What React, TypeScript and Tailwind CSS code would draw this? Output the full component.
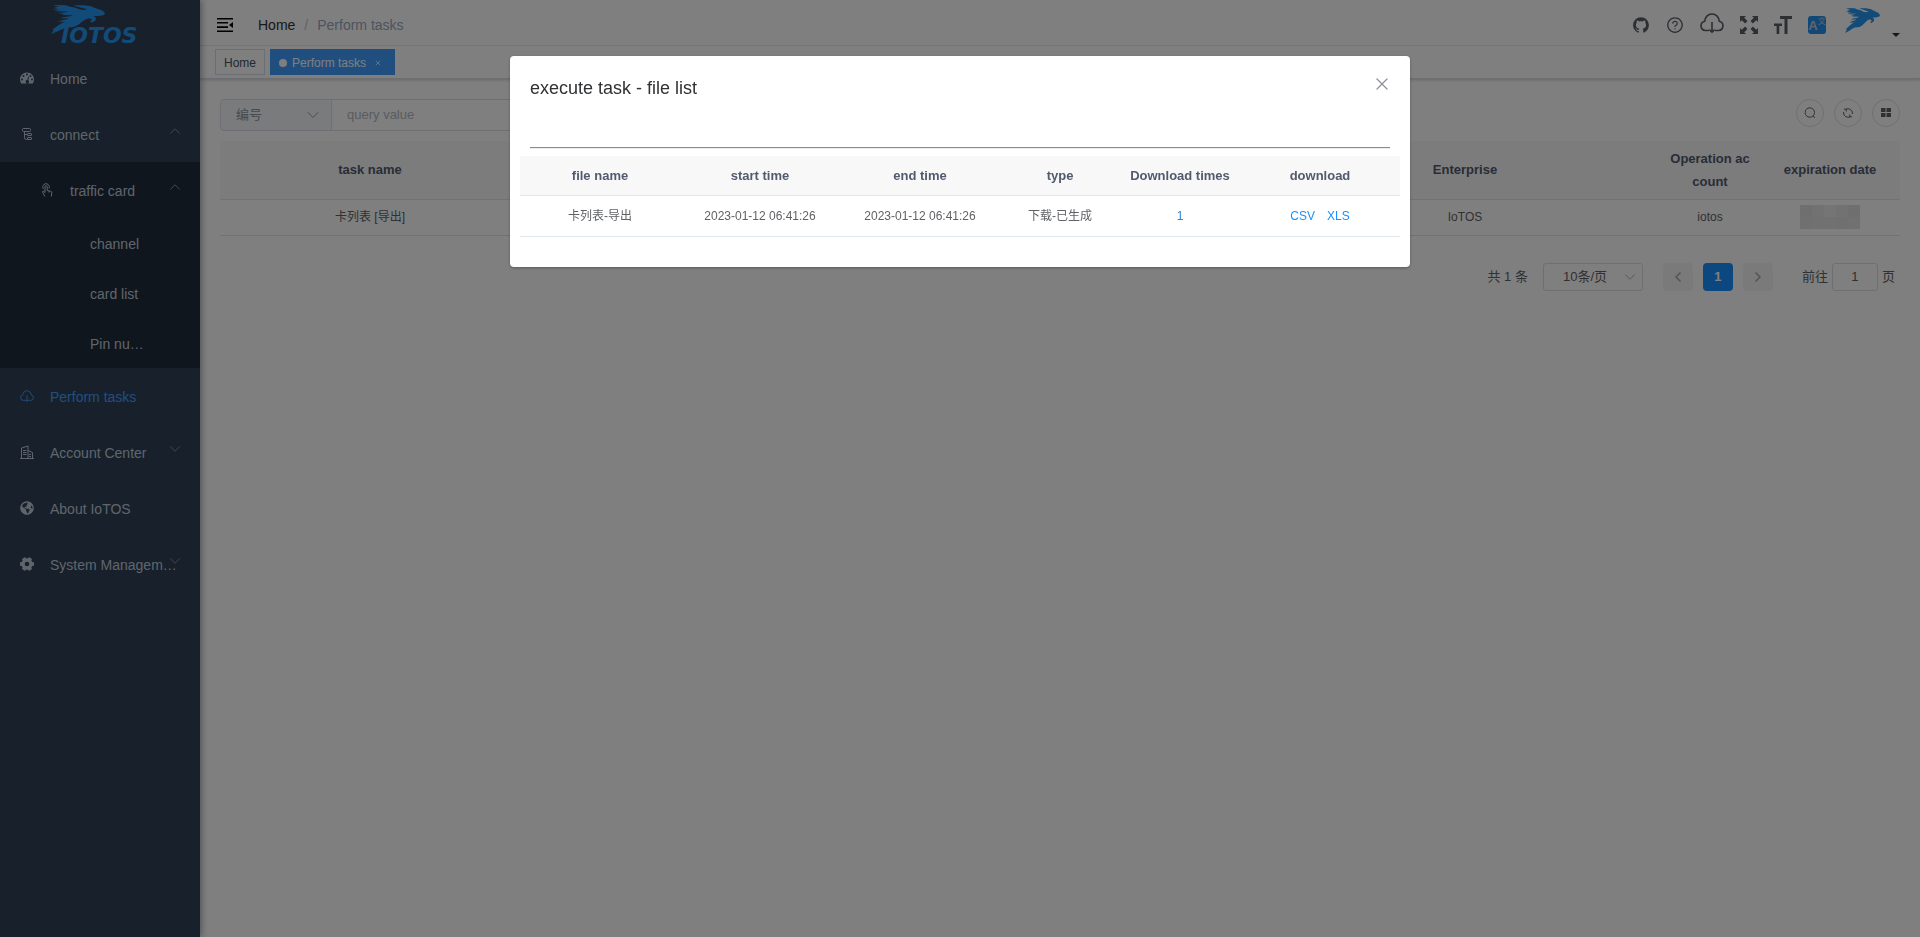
import React from 'react';
import { AiFillGithub, AiOutlineQuestionCircle } from 'react-icons/ai';
import { FaGlobeAmericas } from 'react-icons/fa';
import { ChevronDown, ChevronLeft, ChevronRight, ChevronUp, X } from 'lucide-react';

type IconProps = { className?: string };

function Leopard({ className }: IconProps) {
  return (
    <svg viewBox="0 0 158 88" className={className} fill="#2796f0" preserveAspectRatio="none" aria-hidden="true">
      <path d="M4 0 L44 1 L56 5 L72 8 L82 13 L98 15 L106 13 L92 9 L70 3 L66 1 L96 1 L118 4 L128 9 L140 13 L150 17 L158 25 L155 30 L140 33 L126 33 L132 41 L130 47 L120 53 L114 50 L121 44 L112 40 L102 43 L92 50 L80 60 L66 67 L44 69 L30 74 L20 80 L0 88 L9 75 L3 76 L14 67 L24 60 L34 54 L42 51 L20 51 L30 47 L44 44 L52 40 L26 41 L36 37 L56 34 L64 31 L30 30 L40 27 L20 24 L42 22 L52 20 L12 19 L14 17 L30 15 L4 13 L20 10 L8 7 L24 5 Z" />
    </svg>
  );
}

function DashboardIcon({ className }: IconProps) {
  return (
    <svg viewBox="0 0 28 24" className={className} aria-hidden="true">
      <path
        fill="currentColor"
        fillRule="evenodd"
        d="M14 1C6.300 1 0 7.300 0 15c0 3 .9 5.600 2.400 7.800.2.300.5.400.8.400h21.600c.3 0 .6-.1.800-.4C27.100 20.600 28 18 28 15 28 7.300 21.700 1 14 1zM4 13a2 2 0 1 1 0 4 2 2 0 0 1 0-4zM7 6a2 2 0 1 1 0 4 2 2 0 0 1 0-4zM14 3a2 2 0 1 1 0 4 2 2 0 0 1 0-4zM21 6a2 2 0 1 1 0 4 2 2 0 0 1 0-4zM24 13a2 2 0 1 1 0 4 2 2 0 0 1 0-4zM16.500 9l1.800.5-1.900 7.200a3.200 3.200 0 1 1-1.900-.5z"
      />
    </svg>
  );
}

function ConnectIcon({ className }: IconProps) {
  return (
    <svg viewBox="0 0 14 14" className={className} fill="none" stroke="currentColor" aria-hidden="true">
      <rect x="2.500" y="1.500" width="8" height="3" rx="1" />
      <path d="M4.500 4.500v6q0 2 2 2h1M4.500 7.500h3" />
      <rect x="7.500" y="6.500" width="4" height="2" rx=".5" />
      <rect x="7.500" y="10.500" width="4" height="2" rx=".5" />
    </svg>
  );
}

function TapIcon({ className }: IconProps) {
  return (
    <svg viewBox="0 0 14 14" className={className} fill="none" stroke="currentColor" aria-hidden="true">
      <path d="M3.300 5.800A3.300 3.300 0 1 1 9 5.500" />
      <path d="M5 9.500V3.800a1.100 1.100 0 0 1 2.200 0V7.500l3.500.7q1.300.3 1.100 1.600l-.5 3.700M5 9.500 3.300 8.200q-1-.3-.7.7l2.200 4.600M9 8v1.500" />
    </svg>
  );
}

function GearIcon({ className }: IconProps) {
  return (
    <svg viewBox="0 0 14 14" className={className} fill="none" stroke="currentColor" aria-hidden="true">
      <circle cx="7" cy="7" r="4" strokeWidth="3.400" />
      <path d="M11.500 7H14M0 7h2.500M9.300 10.900l1.200 2.100M3.500 1l1.200 2.100M4.700 10.900 3.500 13M10.500 1 9.300 3.100" strokeWidth="3.600" />
    </svg>
  );
}

function CloudDown({ className }: IconProps) {
  return (
    <svg viewBox="0 0 24 20" className={className} fill="none" stroke="currentColor" strokeWidth="1.600" strokeLinecap="round" strokeLinejoin="round" aria-hidden="true">
      <path d="M8.500 17.500H5.500A4.700 4.700 0 0 1 4.800 8.200 7.200 7.200 0 0 1 19.200 8.200 4.700 4.700 0 0 1 18.500 17.500H15.500" />
      <path d="M12 9.500v9.500M9.800 17l2.200 2.200 2.200-2.200" />
    </svg>
  );
}

function BuildingIcon({ className }: IconProps) {
  return (
    <svg viewBox="0 0 14 14" className={className} fill="none" stroke="currentColor" aria-hidden="true">
      <path d="M0 13.500h14M1.500 13V3L8 1v12M8 5.500l4.500 2V13M3 5.500h3.500M3 7.500h3.500M3 9.500h3.500M9 9.500h2M9 11.500h2" />
    </svg>
  );
}

function FoldIcon({ className }: IconProps) {
  return (
    <svg viewBox="0 0 16 14" className={className} fill="currentColor" aria-hidden="true">
      <path d="M0 0h16v1.600H0zM0 4h11v1.600H0zM0 8.300h11v1.600H0zM0 12.400h16V14H0zM16 4v6l-4-3z" />
    </svg>
  );
}

function FullscreenIcon({ className }: IconProps) {
  return (
    <svg viewBox="0 0 18 18" className={className} fill="currentColor" aria-hidden="true">
      <path d="M0 0h6L4.200 1.800 7.500 5.100 5.100 7.500 1.800 4.200 0 6zM18 0v6l-1.800-1.800-3.300 3.300-2.400-2.400 3.300-3.300L12 0zM0 18v-6l1.800 1.800 3.300-3.300 2.400 2.400-3.300 3.300L6 18zM18 18h-6l1.800-1.800-3.300-3.300 2.400-2.400 3.300 3.300L18 12z" />
    </svg>
  );
}

function SizeIcon({ className }: IconProps) {
  return (
    <svg viewBox="0 0 18 18" className={className} fill="currentColor" aria-hidden="true">
      <path d="M6 0h12v3h-4.500v15h-3V3H6zM0 7.500h8v2.500H5.300v8H2.600v-8H0z" />
    </svg>
  );
}

function SearchIcon({ className }: IconProps) {
  return (
    <svg viewBox="0 0 12 12" className={className} fill="none" stroke="currentColor" aria-hidden="true">
      <circle cx="5.800" cy="5.500" r="4.700" />
      <path d="m9 9 2 1.800" />
    </svg>
  );
}

function RefreshIcon({ className }: IconProps) {
  return (
    <svg viewBox="0 0 12 12" className={className} fill="none" stroke="currentColor" aria-hidden="true">
      <path d="M4 2.200A4.400 4.400 0 0 1 10.400 6v1M8 9.800A4.400 4.400 0 0 1 1.600 6V5M2 2.200H4.200V4.500M10 9.800H7.800V7.500" />
    </svg>
  );
}

function GridIcon({ className }: IconProps) {
  return (
    <svg viewBox="0 0 12 12" className={className} fill="currentColor" aria-hidden="true">
      <path d="M1 1h4.500v4H1zM6.500 1H11v4H6.500zM1 6h4.500v4H1zM6.500 6H11v4H6.500z" />
    </svg>
  );
}

type ItemProps = {
  icon: React.ReactNode;
  label: string;
  active?: boolean;
  nested?: boolean;
  arrow?: 'up' | 'down';
};

function MenuItem({ icon, label, active, nested, arrow }: ItemProps) {
  return (
    <a
      href="#"
      className={`relative flex h-14 items-center ${nested ? 'pl-10' : 'pl-5'} ${active ? 'text-[#409eff]' : 'text-[#bfcbd9]'}`}
    >
      <span className="mr-4 flex w-3.5 shrink-0 justify-center">{icon}</span>
      <span className="whitespace-nowrap pt-px">{label}</span>
      {arrow && (
        <span className="absolute right-4 top-4 text-[#909399]">
          {arrow === 'up' ? <ChevronUp size={18} strokeWidth={1.250} /> : <ChevronDown size={18} strokeWidth={1.250} />}
        </span>
      )}
    </a>
  );
}

function Sidebar() {
  return (
    <aside className="z-10 w-[200px] shrink-0 bg-[#304156] text-sm shadow-[2px_0_6px_rgba(0,21,41,0.35)]">
      <a href="#" className="flex h-[50px] flex-col pl-[51px] pt-[5px] text-[#2796f0]">
        <Leopard className="h-[29px] w-[54px] shrink-0" />
        <span className="-mt-2 ml-2.5 font-['DejaVu_Sans'] text-[22px] font-bold italic leading-5">IOTOS</span>
      </a>
      <nav>
        <MenuItem icon={<DashboardIcon className="h-3 w-3.5" />} label="Home" />
        <MenuItem icon={<ConnectIcon className="size-3.5" />} label="connect" arrow="up" />
        <div className="bg-[#1f2d3d]">
          <MenuItem icon={<TapIcon className="size-3.5" />} label="traffic card" arrow="up" nested />
          {['channel', 'card list', 'Pin nu…'].map((t) => (
            <a key={t} href="#" className="flex h-[50px] items-center pl-[90px] pt-0.5 text-[#bfcbd9]">
              {t}
            </a>
          ))}
        </div>
        <MenuItem icon={<CloudDown className="h-3 w-3.5" />} label="Perform tasks" active />
        <MenuItem icon={<BuildingIcon className="size-3.5" />} label="Account Center" arrow="down" />
        <MenuItem icon={<FaGlobeAmericas className="size-3.5" />} label="About IoTOS" />
        <MenuItem icon={<GearIcon className="size-3.5" />} label="System Managem…" arrow="down" />
      </nav>
    </aside>
  );
}

function Header() {
  return (
    <header className="bg-white">
      <div className="flex h-[46px] items-center justify-between border-b border-[#f0f0f0] pl-[17px] pr-5 pt-1">
        <div className="flex items-center">
          <button aria-label="Toggle sidebar" className="text-black">
            <FoldIcon className="h-3.5 w-4" />
          </button>
          <nav className="ml-[25px] flex gap-[9px] text-sm">
            <a href="#" className="text-[#303133]">Home</a>
            <span className="text-[#c0c4cc]">/</span>
            <span className="text-[#97a8be]">Perform tasks</span>
          </nav>
        </div>
        <div className="flex items-center gap-4 text-[#5a5e66]">
          <a href="#" aria-label="GitHub"><AiFillGithub className="size-[18px]" /></a>
          <a href="#" aria-label="Help"><AiOutlineQuestionCircle className="size-[18px]" /></a>
          <button aria-label="Downloads" className="pb-1"><CloudDown className="h-5 w-6" /></button>
          <button aria-label="Fullscreen"><FullscreenIcon className="size-[18px]" /></button>
          <button aria-label="Font size"><SizeIcon className="size-[18px]" /></button>
          <button aria-label="Language" className="flex size-[18px] justify-center rounded-[3px] bg-[#2490f0] text-[#c8ccd2]">
            <span className="pt-1 text-[13px] font-bold leading-3">A</span>
            <span className="pt-0.5 text-[8px] leading-[8px]">文</span>
          </button>
          <button aria-label="Account" className="ml-[3px] flex items-end gap-3">
            <Leopard className="mb-2 h-[25px] w-[35px]" />
            <svg viewBox="0 0 8 4" className="mb-1 h-1 w-2" aria-hidden="true"><path d="M0 0h8L4 4z" fill="#303133" /></svg>
          </button>
        </div>
      </div>
      <div className="flex h-[33px] gap-[5px] border-b border-[#d8dce5] pl-[15px] pt-[3px] text-xs shadow-[0_1px_3px_rgba(0,0,0,0.2)]">
        <a href="#" className="flex h-[26px] items-center border border-[#d8dce5] px-2 pt-0.5 text-[#495060]">Home</a>
        <a href="#" className="flex h-[26px] items-center bg-[#409eff] px-[9px] pt-0.5 text-white">
          <span className="mr-[5px] size-2 rounded-full bg-white" />
          Perform tasks
          <X size={8} className="ml-2 mr-1" />
        </a>
      </div>
    </header>
  );
}

const roundButton = 'flex size-7 items-center justify-center rounded-full border border-[#dcdfe6] text-[#606266]';

function Toolbar() {
  return (
    <div className="flex h-[42px] items-start justify-between">
      <div className="flex h-8 text-[13px]">
        <label className="relative flex w-28 items-center rounded-l border border-[#dcdfe6] bg-[#f5f7fa] text-[#909399]">
          <select aria-label="Search field" className="h-full w-full appearance-none pl-[15px] outline-none">
            <option>编号</option>
          </select>
          <ChevronDown size={20} strokeWidth={1.250} className="pointer-events-none absolute right-2 text-[#a8abb2]" />
        </label>
        <input aria-label="Query value" placeholder="query value" className="w-60 border-y border-r border-[#dcdfe6] px-[15px] outline-none placeholder:text-[#b4b8c0]" />
      </div>
      <div className="flex gap-2.5">
        <button aria-label="Search" className={roundButton}><SearchIcon className="size-3" /></button>
        <button aria-label="Refresh" className={roundButton}><RefreshIcon className="size-3" /></button>
        <button aria-label="Columns" className={roundButton}><GridIcon className="size-3" /></button>
      </div>
    </div>
  );
}

const redactedCells = [
  'bg-[#dedede]', 'bg-[#e4e4e4]', 'bg-[#eaebed]', 'bg-[#e4e5e8]', 'bg-[#dedede]',
  'bg-[#e0e0e0]', 'bg-[#e3e2e0]', 'bg-[#e2e2e2]', 'bg-[#e1e1e1]', 'bg-[#e2e2e2]',
];

function TaskTable() {
  return (
    <table className="w-full table-fixed border-collapse text-center text-xs text-[#606266]">
      <colgroup>
        <col className="w-[300px]" />
        <col />
        <col className="w-[390px]" />
        <col className="w-[100px]" />
        <col className="w-[140px]" />
      </colgroup>
      <thead>
        <tr className="h-[58px] border-b border-[#dfe6ec] bg-[#f8f8f9] text-[13px] leading-[23px] text-[#515a6e]">
          <th>task name</th>
          <th />
          <th>Enterprise</th>
          <th className="break-all px-2.5">Operation account</th>
          <th>expiration date</th>
        </tr>
      </thead>
      <tbody>
        <tr className="h-9 border-b border-[#dfe6ec]">
          <td>卡列表 [导出]</td>
          <td />
          <td>IoTOS</td>
          <td>iotos</td>
          <td>
            <div className="mx-auto grid w-[60px] grid-cols-5">
              {redactedCells.map((c, i) => (
                <span key={i} className={`h-3 ${c}`} />
              ))}
            </div>
          </td>
        </tr>
      </tbody>
    </table>
  );
}

function Pagination() {
  return (
    <div className="mt-[27px] flex h-7 items-center justify-end pr-[5px] text-[13px] text-[#606266]">
      <span>共 1 条</span>
      <label className="relative ml-[15px] flex h-7 w-[100px] items-center rounded-[3px] border border-[#dcdfe6]">
        <select aria-label="Page size" className="h-full w-full appearance-none pl-[19px] outline-none">
          <option>10条/页</option>
        </select>
        <ChevronDown size={18} strokeWidth={1.250} className="pointer-events-none absolute right-[3px] text-[#a8abb2]" />
      </label>
      <div className="ml-5 flex gap-2.5">
        <button aria-label="Previous page" className="flex h-7 w-[30px] items-center justify-center rounded-sm bg-[#f4f4f5] text-[#a8abb2]"><ChevronLeft size={16} strokeWidth={2.500} /></button>
        <button className="h-7 w-[30px] rounded-sm bg-[#1890ff] font-bold text-white">1</button>
        <button aria-label="Next page" className="flex h-7 w-[30px] items-center justify-center rounded-sm bg-[#f4f4f5] text-[#a8abb2]"><ChevronRight size={16} strokeWidth={2.500} /></button>
      </div>
      <label className="ml-[29px] flex items-center gap-1">
        前往
        <input defaultValue="1" className="h-7 w-[46px] rounded-[3px] border border-[#dcdfe6] text-center outline-none" />
        页
      </label>
    </div>
  );
}

function FileDialog() {
  return (
    <div className="fixed inset-0 z-20 overflow-auto bg-black/50">
      <section role="dialog" aria-label="execute task - file list" className="mx-auto mt-14 max-w-[900px] rounded-sm bg-white shadow-[0_1px_3px_rgba(0,0,0,0.3)]">
        <div className="flex h-[91px] items-start justify-between pl-5 pr-[18px] pt-[18px]">
          <h2 className="pt-0.5 text-lg leading-6 text-[#303133]">execute task - file list</h2>
          <button aria-label="Close" className="text-[#909399]"><X size={20} strokeWidth={1.500} /></button>
        </div>
        <hr className="mx-5 border-b border-t border-b-[#eeeeee] border-t-[#8c8c8c]" />
        <div className="px-2.5 pb-[30px] pt-[7px]">
          <table className="w-full table-fixed border-collapse text-center text-xs text-[#606266]">
            <colgroup>
              <col className="w-[160px]" />
              <col className="w-[160px]" />
              <col className="w-[160px]" />
              <col className="w-[120px]" />
              <col className="w-[120px]" />
              <col className="w-[160px]" />
            </colgroup>
            <thead>
              <tr className="h-[39px] border-b border-[#dfe6ec] bg-[#f8f8f9] text-[13px] text-[#515a6e]">
                <th>file name</th>
                <th>start time</th>
                <th>end time</th>
                <th>type</th>
                <th>Download times</th>
                <th>download</th>
              </tr>
            </thead>
            <tbody>
              <tr className="h-[41px] border-b border-[#dfe6ec]">
                <td>卡列表-导出</td>
                <td>2023-01-12 06:41:26</td>
                <td>2023-01-12 06:41:26</td>
                <td>下载-已生成</td>
                <td className="text-[#2d85cc]">1</td>
                <td className="text-[#1890ff]">
                  <a href="#">CSV</a>
                  <a href="#" className="ml-3">XLS</a>
                </td>
              </tr>
            </tbody>
          </table>
        </div>
      </section>
    </div>
  );
}

export default function App() {
  return (
    <div className="flex min-h-screen bg-white font-['Liberation_Sans','Noto_Sans_CJK_SC',sans-serif]">
      <Sidebar />
      <div className="flex min-w-0 grow flex-col">
        <Header />
        <main className="p-5">
          <Toolbar />
          <TaskTable />
          <Pagination />
        </main>
      </div>
      <FileDialog />
    </div>
  );
}
